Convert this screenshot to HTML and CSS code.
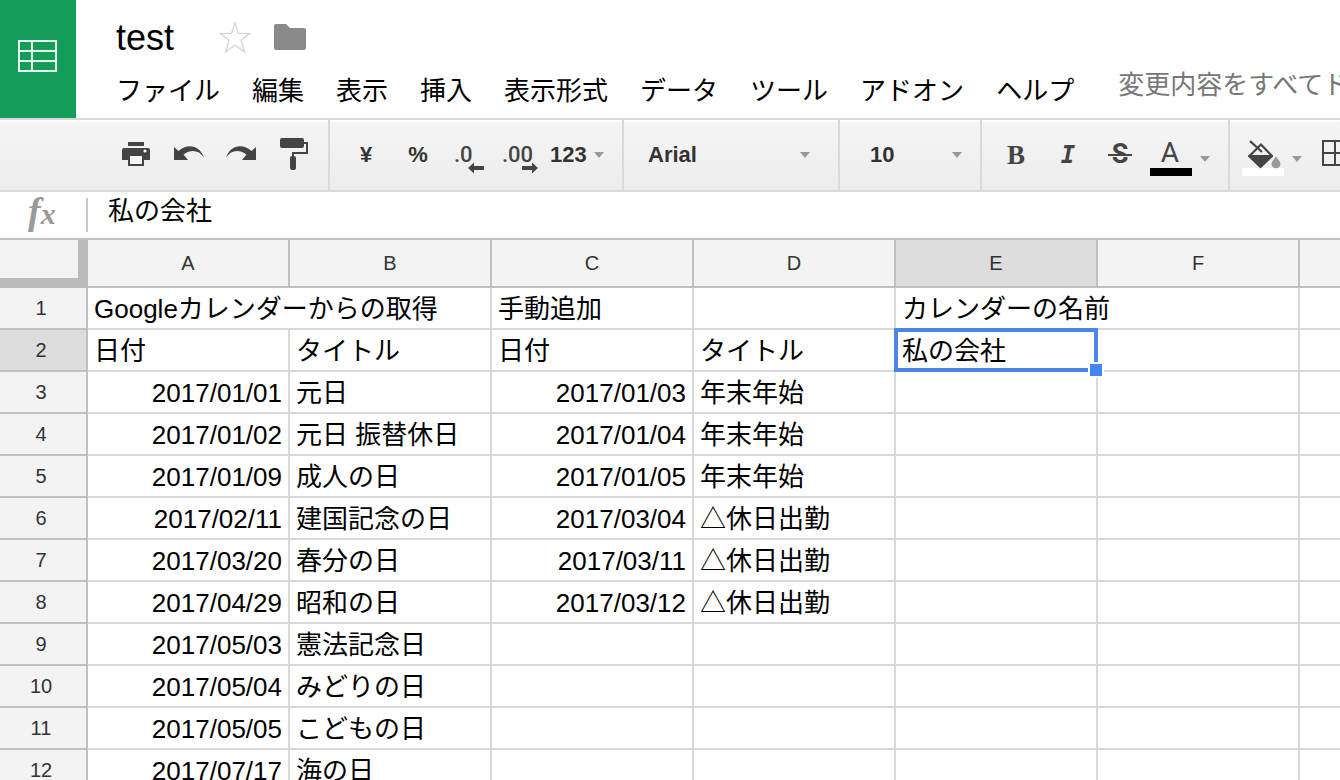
FILE: index.html
```html
<!DOCTYPE html>
<html lang="ja">
<head>
<meta charset="utf-8">
<title>test</title>
<link rel="stylesheet" href="styles.css">
</head>
<body>
<div class="app">
  <header class="header">
    <a class="logo" href="#" aria-label="ホーム">
      <svg width="40" height="34" viewBox="0 0 40 34" fill="none" stroke="#e8fff2" stroke-width="2"><path d="M1 2H38V32H1ZM14 2V32M1 12H38M1 22H38"/></svg>
    </a>
    <div class="header-main">
      <div class="title-row">
        <h1 class="doc-title">test</h1>
        <button class="icon-button" aria-label="スター">
          <svg width="34" height="34" viewBox="0 0 34 34" fill="none" stroke="#d4d4d4" stroke-width="1.3"><path d="M17 2L20.500 12.400L31.500 12.600L23 19.200L26.500 31L17 24L7.500 31L11 19.200L2.500 12.600L13.500 12.400Z"/></svg>
        </button>
        <button class="icon-button" aria-label="フォルダ">
          <svg width="32" height="28" viewBox="0 0 32 28" fill="#8a8a8a"><path d="M2 0H12L16 4H30Q32 4 32 6V24Q32 26 30 26H2Q0 26 0 24V2Q0 0 2 0Z"/></svg>
        </button>
      </div>
      <nav class="menu">
        <button class="menu-item">ファイル</button>
        <button class="menu-item">編集</button>
        <button class="menu-item">表示</button>
        <button class="menu-item">挿入</button>
        <button class="menu-item">表示形式</button>
        <button class="menu-item">データ</button>
        <button class="menu-item">ツール</button>
        <button class="menu-item">アドオン</button>
        <button class="menu-item">ヘルプ</button>
        <span class="save-status">変更内容をすべてドライブに保存しました</span>
      </nav>
    </div>
  </header>

  <div class="toolbar">
    <div class="group group-first">
      <button class="tool" aria-label="印刷">
        <svg width="52" height="70" viewBox="0 0 52 70" fill="#444"><path d="M18 22H34V26H18ZM14 28H38Q40 28 40 30V40H34V46H18V40H12V30Q12 28 14 28Z"/><path fill="#f5f5f5" d="M20 36H32V44H20Z"/><circle cx="35" cy="31" r="1.6" fill="#f5f5f5"/></svg>
      </button>
      <button class="tool" aria-label="元に戻す">
        <svg width="52" height="70" viewBox="0 0 52 70" fill="#444"><path d="M12 27L16.500 31C24 24 37 23.500 42 37.500C37 30 29 29 21.500 34.500L26 40H12Z"/></svg>
      </button>
      <button class="tool" aria-label="やり直し">
        <svg width="52" height="70" viewBox="0 0 52 70" fill="#444"><path d="M42 27L37.500 31C30 24 17 23.500 12 37.500C17 30 25 29 32.500 34.500L28 40H42Z"/></svg>
      </button>
      <button class="tool" aria-label="書式を貼り付け">
        <svg width="52" height="70" viewBox="0 0 52 70" fill="#444"><rect x="14" y="18" width="24" height="10" rx="2"/><path fill="none" stroke="#444" stroke-width="2" d="M38 23H41V33H27V37"/><rect x="24" y="36" width="6" height="14" rx="2"/></svg>
      </button>
    </div>
    <div class="group">
      <button class="tool">¥</button>
      <button class="tool">%</button>
      <button class="tool" aria-label="小数点以下の桁数を減らす">
        <svg width="52" height="70" viewBox="0 0 52 70" fill="#444"><text class="decimal" x="10" y="42">.0</text><path d="M24 48L30 42.500V46H40V50H30V53.500Z"/></svg>
      </button>
      <button class="tool" aria-label="小数点以下の桁数を増やす">
        <svg width="52" height="70" viewBox="0 0 52 70" fill="#444"><text class="decimal" x="6" y="42">.00</text><path d="M42 48L36 42.500V46H26V50H36V53.500Z"/></svg>
      </button>
      <button class="tool tool-format">123<span class="caret"></span></button>
    </div>
    <div class="group">
      <label class="picker picker-font"><select class="picker-select" aria-label="フォント"><option>Arial</option></select><span class="caret"></span></label>
    </div>
    <div class="group">
      <label class="picker picker-size"><select class="picker-select" aria-label="フォントサイズ"><option>10</option></select><span class="caret"></span></label>
    </div>
    <div class="group group-style">
      <button class="tool glyph">B</button>
      <button class="tool glyph glyph-italic">I</button>
      <button class="tool" aria-label="取り消し線">
        <svg width="52" height="70" viewBox="0 0 52 70" fill="#444"><text class="strike-letter" x="26" y="43" text-anchor="middle">S</text><path fill="#f0f0f0" d="M16 36H36V37H16Z"/><path d="M14 34H38V36H14Z"/></svg>
      </button>
      <button class="tool tool-color" aria-label="テキストの色">
        <svg width="42" height="70" viewBox="0 0 42 70" fill="#444"><text class="color-letter" x="20" y="42" text-anchor="middle">A</text><path fill="#000" d="M0 48H42V56H0Z"/></svg>
        <span class="caret caret-low"></span>
      </button>
    </div>
    <div class="group group-style">
      <button class="tool tool-color" aria-label="塗りつぶしの色">
        <svg width="42" height="70" viewBox="0 0 42 70" fill="#444"><path fill="#fff" d="M0 48H42V56H0Z"/><path d="M6 35H31V36.500L18.500 48.500L6 36.500Z"/><path fill="none" stroke="#444" stroke-width="2.200" d="M7.500 36L19 24.500L30 36M8 21L20 32"/><path fill="#999" d="M34 36.500C36 39.500 38.500 41.500 38.500 44A4.500 4.200 0 0 1 29.500 44C29.500 41.500 32 39.500 34 36.500Z"/></svg>
        <span class="caret caret-low"></span>
      </button>
      <button class="tool" aria-label="枠線">
        <svg width="52" height="70" viewBox="0 0 52 70" fill="none" stroke="#444" stroke-width="2"><path d="M13 21H37V45H13ZM25 21V45M13 33H37"/></svg>
      </button>
    </div>
  </div>

  <div class="formula-bar">
    <label class="fx" for="formula"><span class="fx-f">f</span>x</label>
    <input class="formula-input" id="formula" type="text" value="私の会社">
  </div>

  <main class="sheet">
    <table class="grid">
      <colgroup><col class="col-head"><col><col><col><col><col><col><col></colgroup>
      <thead>
        <tr><td class="corner"></td><th>A</th><th>B</th><th>C</th><th>D</th><th class="active">E</th><th>F</th><th></th></tr>
      </thead>
      <tbody>
        <tr><th>1</th><td colspan="2">Googleカレンダーからの取得</td><td>手動追加</td><td></td><td colspan="2">カレンダーの名前</td><td></td></tr>
        <tr><th class="active">2</th><td>日付</td><td>タイトル</td><td>日付</td><td>タイトル</td><td class="selected">私の会社<span class="selection"></span><span class="handle"></span></td><td></td><td></td></tr>
        <tr><th>3</th><td class="date">2017/01/01</td><td>元日</td><td class="date">2017/01/03</td><td>年末年始</td><td></td><td></td><td></td></tr>
        <tr><th>4</th><td class="date">2017/01/02</td><td>元日 振替休日</td><td class="date">2017/01/04</td><td>年末年始</td><td></td><td></td><td></td></tr>
        <tr><th>5</th><td class="date">2017/01/09</td><td>成人の日</td><td class="date">2017/01/05</td><td>年末年始</td><td></td><td></td><td></td></tr>
        <tr><th>6</th><td class="date">2017/02/11</td><td>建国記念の日</td><td class="date">2017/03/04</td><td>△休日出勤</td><td></td><td></td><td></td></tr>
        <tr><th>7</th><td class="date">2017/03/20</td><td>春分の日</td><td class="date">2017/03/11</td><td>△休日出勤</td><td></td><td></td><td></td></tr>
        <tr><th>8</th><td class="date">2017/04/29</td><td>昭和の日</td><td class="date">2017/03/12</td><td>△休日出勤</td><td></td><td></td><td></td></tr>
        <tr><th>9</th><td class="date">2017/05/03</td><td>憲法記念日</td><td></td><td></td><td></td><td></td><td></td></tr>
        <tr><th>10</th><td class="date">2017/05/04</td><td>みどりの日</td><td></td><td></td><td></td><td></td><td></td></tr>
        <tr><th>11</th><td class="date">2017/05/05</td><td>こどもの日</td><td></td><td></td><td></td><td></td><td></td></tr>
        <tr><th>12</th><td class="date">2017/07/17</td><td>海の日</td><td></td><td></td><td></td><td></td><td></td></tr>
      </tbody>
    </table>
  </main>
</div>
</body>
</html>
```
FILE: styles.css
```css
* { box-sizing: border-box; }

body {
  margin: 0;
  background: #fff;
  color: #000;
  font: 26px/38px "Liberation Sans", "Noto Sans CJK JP", sans-serif;
}

button, input, select {
  margin: 0;
  padding: 0;
  border: 0;
  background: none;
  color: inherit;
  font: inherit;
}

svg { display: block; flex: none; }

.app {
  display: flex;
  flex-direction: column;
  height: 100vh;
  overflow: hidden;
}

/* Header */
.header {
  display: flex;
  flex: none;
  border-bottom: 2px solid #d9d9d9;
}

.logo {
  display: flex;
  flex: none;
  justify-content: center;
  width: 76px;
  padding-top: 39px;
  background: #139d59;
}

.header-main {
  flex: 1;
  min-width: 0;
  padding: 16px 0 8px 40px;
  overflow: hidden;
}

.title-row { display: flex; align-items: center; height: 44px; }

.doc-title { margin: 0 44px 0 0; font-size: 36px; font-weight: 400; }

.icon-button { margin-right: 22px; }

.menu {
  display: flex;
  gap: 32px;
  padding-top: 12px;
  white-space: nowrap;
}

.menu-item { flex: none; }

.save-status { margin-left: 12px; line-height: 26px; color: #777; }

/* Toolbar */
.toolbar {
  display: flex;
  flex: none;
  overflow: hidden;
  border-bottom: 2px solid #d9d9d9;
  background: linear-gradient(#fff 2px, #f5f5f5 2px, #ececec);
  color: #333;
  font-size: 22px;
  font-weight: 700;
}

.group {
  display: flex;
  flex: none;
  padding: 0 10px;
  border-right: 2px solid #d9d9d9;
}

.group-first { padding-left: 110px; }
.group-style { padding: 0 10px 0 8px; }

.tool {
  display: flex;
  flex: none;
  align-items: center;
  justify-content: center;
  width: 52px;
}

.tool-format { justify-content: space-between; width: 64px; padding: 0 8px 0 2px; }
.tool-color { justify-content: space-between; width: 72px; padding: 0 8px 0 4px; }

.decimal { font: 500 22px Roboto, sans-serif; }
.glyph { color: #444; font: 700 27px "Liberation Serif", serif; }
.glyph-italic { font: italic 700 24px "DejaVu Sans Mono", monospace; }
.strike-letter { font: 700 27px Roboto, sans-serif; }
.color-letter { font: 400 28px Roboto, sans-serif; }

.caret {
  flex: none;
  border: 5px solid transparent;
  border-top: 6px solid #999;
  border-bottom: 0;
}

.caret-low { margin-top: 8px; }

.picker { display: flex; align-items: center; }
.picker-font { width: 194px; padding: 0 18px 0 14px; }
.picker-size { width: 120px; padding: 0 8px 0 20px; }
.picker-select { flex: 1; min-width: 0; appearance: none; }

/* Formula bar */
.formula-bar {
  display: flex;
  flex: none;
  align-items: flex-start;
  padding-bottom: 6px;
  border-bottom: 2px solid #c0c0c0;
}

.fx {
  width: 88px;
  height: 34px;
  margin-top: 6px;
  padding-left: 28px;
  border-right: 2px solid #c8c8c8;
  color: #999;
  font: italic 700 30px/26px "Liberation Serif", serif;
}

.fx-f { font-size: 38px; }

.formula-input { flex: 1; min-width: 0; height: 38px; padding: 0 0 0 20px; outline: 0; }

/* Sheet */
.sheet { flex: 1; min-height: 0; overflow: hidden; }

.grid {
  width: 1502px;
  table-layout: fixed;
  border-collapse: separate;
  border-spacing: 0;
}

.col-head { width: 88px; }

.grid td {
  height: 42px;
  padding: 2px 6px 0;
  border-right: 2px solid #d9d9d9;
  border-bottom: 2px solid #d9d9d9;
  white-space: nowrap;
}

.grid th {
  padding: 0;
  border-right: 2px solid #c0c0c0;
  border-bottom: 2px solid #c0c0c0;
  background: #f3f3f3;
  color: #333;
  font-size: 20px;
  font-weight: 400;
}

.grid tbody th { padding-right: 4px; }
.grid thead th { height: 48px; }
.grid .active { background: #ddd; }

.grid .corner {
  border-right: 10px solid #bbb;
  border-bottom: 10px solid #bbb;
  background: #f3f3f3;
}

.grid .date { text-align: right; }

.selected { position: relative; }

.selection {
  position: absolute;
  inset: -2px;
  border: 4px solid #4a86e8;
}

.handle {
  position: absolute;
  right: -8px;
  bottom: -8px;
  width: 16px;
  height: 16px;
  border: 2px solid #fff;
  background: #4285f4;
}
```
